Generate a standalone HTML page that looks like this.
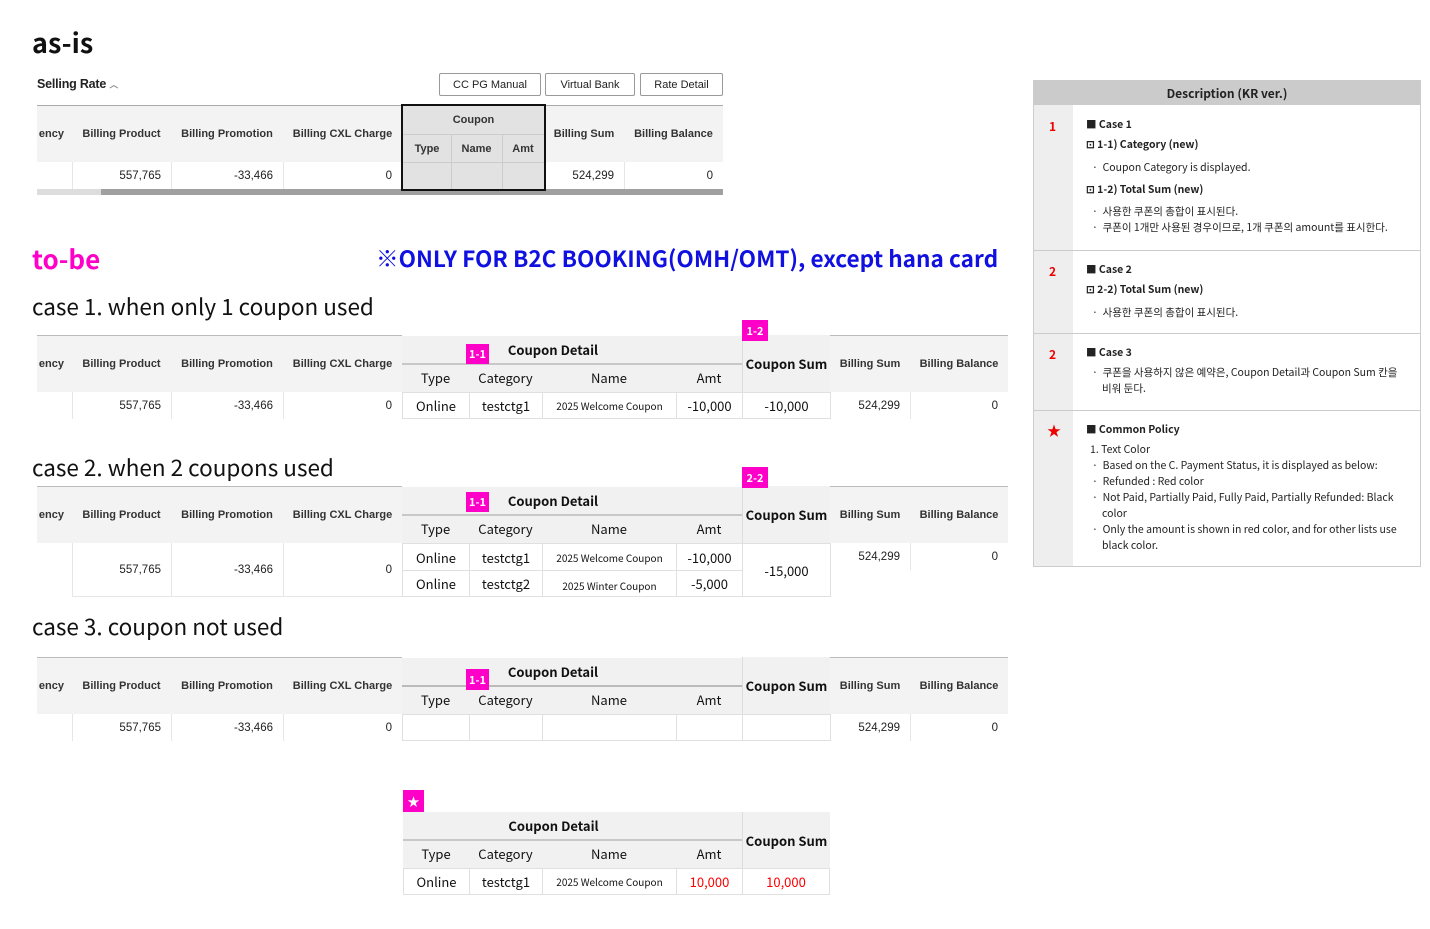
<!DOCTYPE html>
<html><head><meta charset="utf-8">
<style>
*{margin:0;padding:0;box-sizing:border-box}
body{width:1430px;height:929px;background:#fff;position:relative;overflow:hidden;font-family:"Liberation Sans","Noto Sans CJK KR",sans-serif;color:#222}
.a{position:absolute}
.c{position:absolute;display:flex;align-items:center;justify-content:center;font-size:12px;white-space:nowrap}
.r{justify-content:flex-end;padding-right:10px}
.hd{background:#f3f3f3;color:#333;font-weight:bold;font-size:11px}
.en{background:none;justify-content:flex-end;padding-right:8px;overflow:hidden}
.k{font-family:"Noto Sans CJK KR","Liberation Sans",sans-serif}
.cd{background:#f1f1f1;font-family:"Noto Sans CJK KR",sans-serif;font-size:13px;color:#111}
.ct{padding-right:38px}
.b{font-weight:bold}
.dc{border:1px solid #e0e0e0;font-family:"Noto Sans CJK KR",sans-serif;font-size:13px;color:#111}
.vl{position:absolute;width:1px;background:#e6e6e6}
.bd{position:absolute;background:#ff00c8;color:#fff;font-family:"Noto Sans CJK KR",sans-serif;font-size:11px;font-weight:bold;display:flex;align-items:center;justify-content:center}
.t{position:absolute;font-family:"Noto Sans CJK KR","Liberation Sans",sans-serif;font-size:22.5px;color:#111}
.ds{font-size:10.5px;color:#222;line-height:16px}
</style></head><body>

<div class="a" style="left:32px;top:22px;font-size:27px;font-weight:bold;font-family:'Noto Sans CJK KR',sans-serif;color:#111">as-is</div>

<!-- as-is -->
<div class="a" style="left:37px;top:77px;font-size:12.5px;color:#222;font-weight:bold;letter-spacing:-0.2px">Selling Rate <span style="font-size:9px;color:#888">︿</span></div>
<div class="c" style="left:439px;top:73px;width:102px;height:23px;border:1px solid #999;font-size:11px;border-radius:2px">CC PG Manual</div>
<div class="c" style="left:545px;top:73px;width:90px;height:23px;border:1px solid #999;font-size:11px;border-radius:2px">Virtual Bank</div>
<div class="c" style="left:640px;top:73px;width:83px;height:23px;border:1px solid #999;font-size:11px;border-radius:2px">Rate Detail</div>
<div class="a" style="left:37px;top:105px;width:686px;height:57px;background:#f3f3f3;border-top:1px solid #aaa"></div>
<div class="vl" style="left:72px;top:106px;height:83px"></div>
<div class="vl" style="left:171px;top:106px;height:83px"></div>
<div class="vl" style="left:283px;top:106px;height:83px"></div>
<div class="vl" style="left:624px;top:106px;height:83px"></div>
<div class="c hd en" style="left:37px;top:106px;width:35px;height:56px">ency</div>
<div class="c hd" style="left:72px;top:106px;width:99px;height:56px">Billing Product</div>
<div class="c hd" style="left:171px;top:106px;width:112px;height:56px">Billing Promotion</div>
<div class="c hd" style="left:283px;top:106px;width:119px;height:56px">Billing CXL Charge</div>
<div class="c hd" style="left:544px;top:106px;width:80px;height:56px">Billing Sum</div>
<div class="c hd" style="left:624px;top:106px;width:99px;height:56px">Billing Balance</div>
<div class="c r" style="left:72px;top:162px;width:99px;height:27px;font-size:11.5px">557,765</div>
<div class="c r" style="left:171px;top:162px;width:112px;height:27px;font-size:11.5px">-33,466</div>
<div class="c r" style="left:283px;top:162px;width:119px;height:27px;font-size:11.5px">0</div>
<div class="c r" style="left:544px;top:162px;width:80px;height:27px;font-size:11.5px">524,299</div>
<div class="c r" style="left:624px;top:162px;width:99px;height:27px;font-size:11.5px">0</div>
<div class="a" style="left:37px;top:189px;width:686px;height:6px;background:#a0a0a0"></div>
<div class="a" style="left:37px;top:189px;width:64px;height:6px;background:#ddd"></div>
<div class="a" style="left:401px;top:104px;width:145px;height:87px;background:#e2e2e2;border:2px solid #111"></div>
<div class="a" style="left:403px;top:134px;width:141px;height:1px;background:#ccc"></div>
<div class="a" style="left:403px;top:162px;width:141px;height:1px;background:#ccc"></div>
<div class="vl" style="left:451px;top:135px;height:54px;background:#ccc"></div>
<div class="vl" style="left:502px;top:135px;height:54px;background:#ccc"></div>
<div class="c hd" style="left:403px;top:106px;width:141px;height:28px;background:none">Coupon</div>
<div class="c hd" style="left:403px;top:135px;width:48px;height:27px;background:none">Type</div>
<div class="c hd" style="left:451px;top:135px;width:51px;height:27px;background:none">Name</div>
<div class="c hd" style="left:502px;top:135px;width:42px;height:27px;background:none">Amt</div>

<!-- to-be -->
<div class="a" style="left:32px;top:240px;font-size:26px;font-weight:bold;color:#ff00c8;font-family:'Noto Sans CJK KR',sans-serif">to-be</div>
<div class="a" style="left:376px;top:241px;font-size:22.6px;font-weight:bold;color:#1010e0;font-family:'Noto Sans CJK KR',sans-serif">※ONLY FOR B2C BOOKING(OMH/OMT), except hana card</div>
<div class="t" style="left:32px;top:290px">case 1. when only 1 coupon used</div>
<div class="t" style="left:32px;top:451px">case 2. when 2 coupons used</div>
<div class="t" style="left:32px;top:610px">case 3. coupon not used</div>

<!-- CASE 1 (T=336) -->
<div class="a" style="left:0;top:336px;width:1010px;height:90px">
 <div class="a" style="left:37px;top:-1px;width:365px;height:57px;background:#f3f3f3;border-top:1px solid #bbb"></div>
 <div class="a" style="left:830px;top:-1px;width:178px;height:57px;background:#f3f3f3;border-top:1px solid #bbb"></div>
 <div class="vl" style="left:72px;top:0;height:83px"></div><div class="vl" style="left:171px;top:0;height:83px"></div><div class="vl" style="left:283px;top:0;height:83px"></div><div class="vl" style="left:910px;top:0;height:83px"></div>
 <div class="c hd en" style="left:37px;top:0;width:35px;height:56px">ency</div>
 <div class="c hd" style="left:72px;top:0;width:99px;height:56px">Billing Product</div>
 <div class="c hd" style="left:171px;top:0;width:112px;height:56px">Billing Promotion</div>
 <div class="c hd" style="left:283px;top:0;width:119px;height:56px">Billing CXL Charge</div>
 <div class="c hd" style="left:830px;top:0;width:80px;height:56px">Billing Sum</div>
 <div class="c hd" style="left:910px;top:0;width:98px;height:56px">Billing Balance</div>
 <div class="c cd b ct" style="left:402px;top:0;width:340px;height:29px;border-bottom:2px solid #c8c8c8">Coupon Detail</div>
 <div class="c cd" style="left:402px;top:29px;width:67px;height:25px">Type</div>
 <div class="c cd" style="left:469px;top:29px;width:73px;height:25px">Category</div>
 <div class="c cd" style="left:542px;top:29px;width:134px;height:25px">Name</div>
 <div class="c cd" style="left:676px;top:29px;width:66px;height:25px">Amt</div>
 <div class="a" style="left:402px;top:54px;width:340px;height:2px;background:#f1f1f1"></div>
 <div class="c cd b" style="left:742px;top:-1px;width:88px;height:57px;border-left:1px solid #ddd">Coupon Sum</div>
 <div class="c r" style="left:72px;top:56px;width:99px;height:27px;font-size:11.5px">557,765</div>
 <div class="c r" style="left:171px;top:56px;width:112px;height:27px;font-size:11.5px">-33,466</div>
 <div class="c r" style="left:283px;top:56px;width:119px;height:27px;font-size:11.5px">0</div>
 <div class="c dc" style="left:402px;top:56px;width:68px;height:27px">Online</div>
 <div class="c dc" style="left:469px;top:56px;width:74px;height:27px">testctg1</div>
 <div class="c dc" style="left:542px;top:56px;width:135px;height:27px;font-size:10px">2025 Welcome Coupon</div>
 <div class="c dc" style="left:676px;top:56px;width:67px;height:27px">-10,000</div>
 <div class="c dc" style="left:742px;top:56px;width:89px;height:27px">-10,000</div>
 <div class="c r" style="left:830px;top:56px;width:80px;height:27px;font-size:11.5px">524,299</div>
 <div class="c r" style="left:910px;top:56px;width:98px;height:27px;font-size:11.5px">0</div>
 <div class="bd" style="left:466px;top:8px;width:23px;height:20px">1-1</div>
 <div class="bd" style="left:742px;top:-16px;width:26px;height:21px">1-2</div>
</div>

<!-- CASE 2 (T=487) -->
<div class="a" style="left:0;top:487px;width:1010px;height:115px">
 <div class="a" style="left:37px;top:-1px;width:365px;height:57px;background:#f3f3f3;border-top:1px solid #bbb"></div>
 <div class="a" style="left:830px;top:-1px;width:178px;height:57px;background:#f3f3f3;border-top:1px solid #bbb"></div>
 <div class="vl" style="left:72px;top:0;height:110px"></div><div class="vl" style="left:171px;top:0;height:110px"></div><div class="vl" style="left:283px;top:0;height:110px"></div><div class="vl" style="left:910px;top:0;height:83px"></div>
 <div class="a" style="left:72px;top:109px;width:330px;height:1px;background:#e6e6e6"></div>
 <div class="c hd en" style="left:37px;top:0;width:35px;height:56px">ency</div>
 <div class="c hd" style="left:72px;top:0;width:99px;height:56px">Billing Product</div>
 <div class="c hd" style="left:171px;top:0;width:112px;height:56px">Billing Promotion</div>
 <div class="c hd" style="left:283px;top:0;width:119px;height:56px">Billing CXL Charge</div>
 <div class="c hd" style="left:830px;top:0;width:80px;height:56px">Billing Sum</div>
 <div class="c hd" style="left:910px;top:0;width:98px;height:56px">Billing Balance</div>
 <div class="c cd b ct" style="left:402px;top:0;width:340px;height:29px;border-bottom:2px solid #c8c8c8">Coupon Detail</div>
 <div class="c cd" style="left:402px;top:29px;width:67px;height:25px">Type</div>
 <div class="c cd" style="left:469px;top:29px;width:73px;height:25px">Category</div>
 <div class="c cd" style="left:542px;top:29px;width:134px;height:25px">Name</div>
 <div class="c cd" style="left:676px;top:29px;width:66px;height:25px">Amt</div>
 <div class="a" style="left:402px;top:54px;width:340px;height:2px;background:#f1f1f1"></div>
 <div class="c cd b" style="left:742px;top:-1px;width:88px;height:57px;border-left:1px solid #ddd">Coupon Sum</div>
 <div class="c r" style="left:72px;top:56px;width:99px;height:54px;font-size:11.5px">557,765</div>
 <div class="c r" style="left:171px;top:56px;width:112px;height:54px;font-size:11.5px">-33,466</div>
 <div class="c r" style="left:283px;top:56px;width:119px;height:54px;font-size:11.5px">0</div>
 <div class="c dc" style="left:402px;top:56px;width:68px;height:28px">Online</div>
 <div class="c dc" style="left:469px;top:56px;width:74px;height:28px">testctg1</div>
 <div class="c dc" style="left:542px;top:56px;width:135px;height:28px;font-size:10px">2025 Welcome Coupon</div>
 <div class="c dc" style="left:676px;top:56px;width:67px;height:28px">-10,000</div>
 <div class="c dc" style="left:402px;top:83px;width:68px;height:27px">Online</div>
 <div class="c dc" style="left:469px;top:83px;width:74px;height:27px">testctg2</div>
 <div class="c dc" style="left:542px;top:83px;width:135px;height:27px;font-size:10px;padding-top:4px">2025 Winter Coupon</div>
 <div class="c dc" style="left:676px;top:83px;width:67px;height:27px">-5,000</div>
 <div class="c dc" style="left:742px;top:56px;width:89px;height:54px">-15,000</div>
 <div class="c r" style="left:830px;top:56px;width:80px;height:27px;font-size:11.5px">524,299</div>
 <div class="c r" style="left:910px;top:56px;width:98px;height:27px;font-size:11.5px">0</div>
 <div class="bd" style="left:466px;top:5px;width:23px;height:20px">1-1</div>
 <div class="bd" style="left:742px;top:-20px;width:26px;height:21px">2-2</div>
</div>

<!-- CASE 3 (T=658) -->
<div class="a" style="left:0;top:658px;width:1010px;height:90px">
 <div class="a" style="left:37px;top:-1px;width:365px;height:57px;background:#f3f3f3;border-top:1px solid #bbb"></div>
 <div class="a" style="left:830px;top:-1px;width:178px;height:57px;background:#f3f3f3;border-top:1px solid #bbb"></div>
 <div class="vl" style="left:72px;top:0;height:83px"></div><div class="vl" style="left:171px;top:0;height:83px"></div><div class="vl" style="left:283px;top:0;height:83px"></div><div class="vl" style="left:910px;top:0;height:83px"></div>
 <div class="c hd en" style="left:37px;top:0;width:35px;height:56px">ency</div>
 <div class="c hd" style="left:72px;top:0;width:99px;height:56px">Billing Product</div>
 <div class="c hd" style="left:171px;top:0;width:112px;height:56px">Billing Promotion</div>
 <div class="c hd" style="left:283px;top:0;width:119px;height:56px">Billing CXL Charge</div>
 <div class="c hd" style="left:830px;top:0;width:80px;height:56px">Billing Sum</div>
 <div class="c hd" style="left:910px;top:0;width:98px;height:56px">Billing Balance</div>
 <div class="c cd b ct" style="left:402px;top:0;width:340px;height:29px;border-bottom:2px solid #bbb">Coupon Detail</div>
 <div class="c cd" style="left:402px;top:29px;width:67px;height:25px">Type</div>
 <div class="c cd" style="left:469px;top:29px;width:73px;height:25px">Category</div>
 <div class="c cd" style="left:542px;top:29px;width:134px;height:25px">Name</div>
 <div class="c cd" style="left:676px;top:29px;width:66px;height:25px">Amt</div>
 <div class="a" style="left:402px;top:54px;width:340px;height:2px;background:#f1f1f1"></div>
 <div class="c cd b" style="left:742px;top:-1px;width:88px;height:57px;border-left:1px solid #ddd">Coupon Sum</div>
 <div class="c r" style="left:72px;top:56px;width:99px;height:27px;font-size:11.5px">557,765</div>
 <div class="c r" style="left:171px;top:56px;width:112px;height:27px;font-size:11.5px">-33,466</div>
 <div class="c r" style="left:283px;top:56px;width:119px;height:27px;font-size:11.5px">0</div>
 <div class="c dc" style="left:402px;top:56px;width:68px;height:27px"></div>
 <div class="c dc" style="left:469px;top:56px;width:74px;height:27px"></div>
 <div class="c dc" style="left:542px;top:56px;width:135px;height:27px"></div>
 <div class="c dc" style="left:676px;top:56px;width:67px;height:27px"></div>
 <div class="c dc" style="left:742px;top:56px;width:89px;height:27px"></div>
 <div class="c r" style="left:830px;top:56px;width:80px;height:27px;font-size:11.5px">524,299</div>
 <div class="c r" style="left:910px;top:56px;width:98px;height:27px;font-size:11.5px">0</div>
 <div class="bd" style="left:466px;top:11px;width:23px;height:21px">1-1</div>
</div>

<!-- star table (T=812) -->
<div class="a" style="left:0;top:812px;width:1010px;height:90px">
 <div class="bd" style="left:403px;top:-22px;width:21px;height:22px;font-size:12px">★</div>
 <div class="c cd b ct" style="left:403px;top:0;width:339px;height:29px;border-bottom:2px solid #c8c8c8">Coupon Detail</div>
 <div class="c cd" style="left:403px;top:29px;width:66px;height:25px">Type</div>
 <div class="c cd" style="left:469px;top:29px;width:73px;height:25px">Category</div>
 <div class="c cd" style="left:542px;top:29px;width:134px;height:25px">Name</div>
 <div class="c cd" style="left:676px;top:29px;width:66px;height:25px">Amt</div>
 <div class="a" style="left:403px;top:54px;width:339px;height:2px;background:#f1f1f1"></div>
 <div class="c cd b" style="left:742px;top:0;width:88px;height:56px;border-left:1px solid #ddd">Coupon Sum</div>
 <div class="c dc" style="left:403px;top:56px;width:67px;height:27px">Online</div>
 <div class="c dc" style="left:469px;top:56px;width:74px;height:27px">testctg1</div>
 <div class="c dc" style="left:542px;top:56px;width:135px;height:27px;font-size:10px">2025 Welcome Coupon</div>
 <div class="c dc" style="left:676px;top:56px;width:67px;height:27px;color:#f00">10,000</div>
 <div class="c dc" style="left:742px;top:56px;width:88px;height:27px;color:#f00">10,000</div>
</div>

<!-- Description -->
<div class="a k" style="left:1033px;top:80px;width:388px;height:487px;border:1px solid #ccc;background:#fff">
 <div class="c b k" style="left:0;top:0;width:386px;height:24px;background:#cbcbcb;font-size:12px;color:#222">Description (KR ver.)</div>
 <div class="a" style="left:0;top:24px;width:39px;height:461px;background:#eeeeee"></div>
 <div class="a" style="left:0;top:169px;width:386px;height:1px;background:#ccc"></div>
 <div class="a" style="left:0;top:252px;width:386px;height:1px;background:#ccc"></div>
 <div class="a" style="left:0;top:329px;width:386px;height:1px;background:#ccc"></div>
 <div class="a b" style="left:15px;top:37px;color:#e00;font-size:12px">1</div>
 <div class="a b" style="left:15px;top:182px;color:#e00;font-size:12px">2</div>
 <div class="a b" style="left:15px;top:265px;color:#e00;font-size:12px">2</div>
 <div class="a" style="left:13px;top:340px;color:#e00;font-size:14px">★</div>

 <div class="a ds k" style="left:52px;top:36px;width:330px">
  <div class="b">■ Case 1</div>
  <div class="b" style="margin-top:4px">⊡ 1-1) Category (new)</div>
  <div style="margin-top:7px;padding-left:6px">· &nbsp;Coupon Category is displayed.</div>
  <div class="b" style="margin-top:6px">⊡ 1-2) Total Sum (new)</div>
  <div style="margin-top:6px;padding-left:6px">· &nbsp;사용한 쿠폰의 총합이 표시된다.</div>
  <div style="padding-left:6px">· &nbsp;쿠폰이 1개만 사용된 경우이므로, 1개 쿠폰의 amount를 표시한다.</div>
 </div>
 <div class="a ds k" style="left:52px;top:181px;width:330px">
  <div class="b">■ Case 2</div>
  <div class="b" style="margin-top:4px">⊡ 2-2) Total Sum (new)</div>
  <div style="margin-top:7px;padding-left:6px">· &nbsp;사용한 쿠폰의 총합이 표시된다.</div>
 </div>
 <div class="a ds k" style="left:52px;top:264px;width:322px">
  <div class="b">■ Case 3</div>
  <div style="margin-top:4px;padding-left:16px;text-indent:-10px">· &nbsp;쿠폰을 사용하지 않은 예약은, Coupon Detail과 Coupon Sum 칸을 비워 둔다.</div>
 </div>
 <div class="a ds k" style="left:52px;top:341px;width:330px">
  <div class="b">■ Common Policy</div>
  <div style="margin-top:4px;padding-left:4px">1. Text Color</div>
  <div style="padding-left:16px;text-indent:-10px">· &nbsp;Based on the C. Payment Status, it is displayed as below:</div>
  <div style="padding-left:16px;text-indent:-10px">· &nbsp;Refunded : Red color</div>
  <div style="padding-left:16px;text-indent:-10px">· &nbsp;Not Paid, Partially Paid, Fully Paid, Partially Refunded: Black color</div>
  <div style="padding-left:16px;text-indent:-10px">· &nbsp;Only the amount is shown in red color, and for other lists use black color.</div>
 </div>
</div>
</body></html>
